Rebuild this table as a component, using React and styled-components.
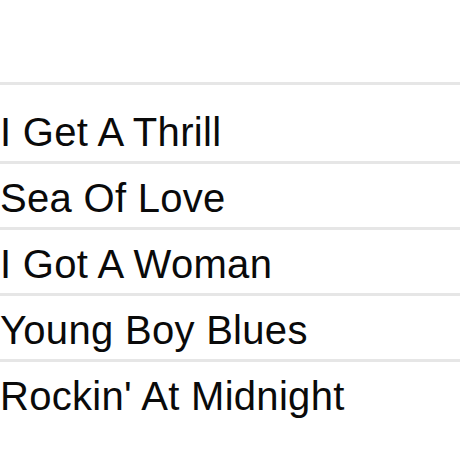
import React from 'react';
import styled, { createGlobalStyle } from 'styled-components';

const GlobalStyle = createGlobalStyle`
    html, body {
        margin: 0;
        padding: 0;
        background: #fff;
    }
`;

const SongList = styled.ul`
    list-style: none;
    margin: 82px 0 0;
    padding: 0;
    font-family: "Liberation Sans", Arial, sans-serif;
    font-size: 40px;
    letter-spacing: 0.3px;
    color: #0a0a0a;
`;

const SongRow = styled.li`
    border-top: 3px solid #e6e6e6;
    padding: ${props => props.first ? '17px' : '4px'} 0 0;
    height: ${props => props.first ? '59px' : '59px'};
    line-height: 60px;
    white-space: nowrap;
`;

const songs = [
    'I Get A Thrill',
    'Sea Of Love',
    'I Got A Woman',
    'Young Boy Blues',
    "Rockin' At Midnight",
];

const App = () => {
    return (
        <>
            <GlobalStyle />
            <SongList>
                {songs.map((song, i) => (
                    <SongRow key={song} first={i === 0}>{song}</SongRow>
                ))}
            </SongList>
        </>
    )
};

export default App;
